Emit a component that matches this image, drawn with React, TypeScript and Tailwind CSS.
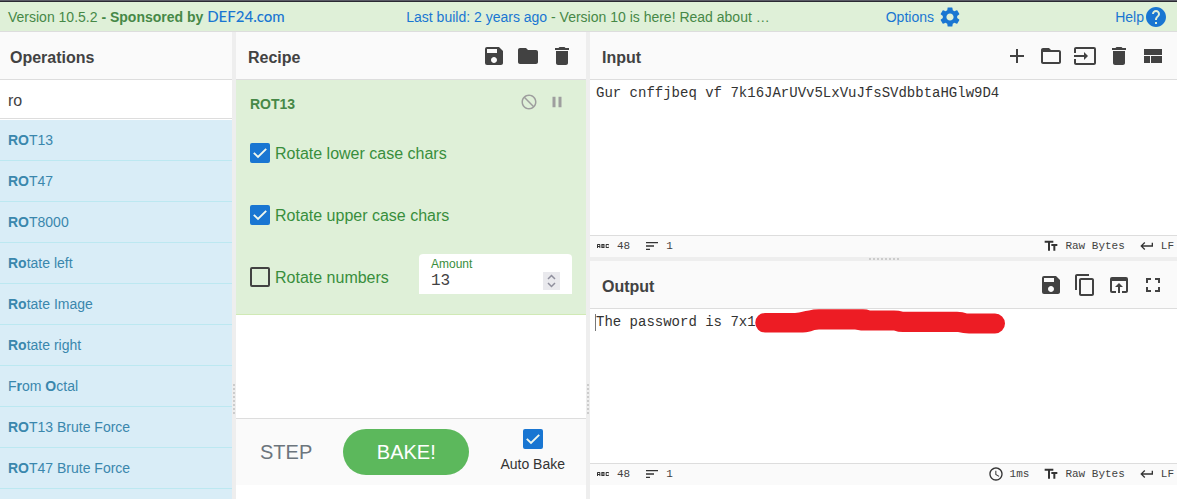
import React, { useState } from "react";
import type { IconType } from "react-icons";
import {
  MdAbc,
  MdAdd,
  MdContentCopy,
  MdDelete,
  MdFolder,
  MdFullscreen,
  MdHelp,
  MdInput,
  MdKeyboardReturn,
  MdNotInterested,
  MdOpenInBrowser,
  MdPause,
  MdSave,
  MdSchedule,
  MdSettings,
  MdSort,
  MdTextFields,
} from "react-icons/md";

type IconProps = { className?: string };

function FolderOutline({ className }: IconProps) {
  return (
    <svg viewBox="0 0 24 24" fill="currentColor" className={className}>
      <path d="M20 6h-8l-2-2H4c-1.100 0-1.990.9-1.990 2L2 18c0 1.100.9 2 2 2h16c1.100 0 2-.9 2-2V8c0-1.100-.9-2-2-2zm0 12H4V8h16v10z" />
    </svg>
  );
}

function LayoutIcon({ className }: IconProps) {
  return (
    <svg viewBox="0 0 24 24" fill="currentColor" className={className}>
      <path d="M3 19h6v-7H3v7zm7 0h11v-7H10v7zM3 5v6h18V5H3z" />
    </svg>
  );
}

type AnyIcon = IconType | React.FC<IconProps>;

function IconButton({ icon: Icon, label }: { icon: AnyIcon; label: string }) {
  return (
    <button type="button" aria-label={label} className="text-[#424242]">
      <Icon className="size-6" />
    </button>
  );
}

function TitleBar({ title, children }: { title: string; children?: React.ReactNode }) {
  return (
    <header className="flex h-12 shrink-0 items-center justify-between border-b border-[#ddd] bg-[#fafafa] px-3">
      <h2 className="pt-1 text-base font-bold text-[#424242]">{title}</h2>
      <div className="flex gap-2.5">{children}</div>
    </header>
  );
}

function CheckBox({ label, id, initial = false }: { label?: string; id: string; initial?: boolean }) {
  const [on, setOn] = useState(initial);
  return (
    <span className="relative size-5 shrink-0">
      <input
        id={id}
        type="checkbox"
        aria-label={label}
        checked={on}
        onChange={() => setOn(!on)}
        className="block size-5 appearance-none rounded-xs border-2 border-[#424242] checked:border-[#1976d2] checked:bg-[#1976d2]"
      />
      {on && (
        <svg viewBox="0 0 20 20" className="pointer-events-none absolute inset-0 size-5">
          <path d="M3.800 9.800L8 14L16.200 5.800" fill="none" stroke="#f1f8ee" strokeWidth="1.900" />
        </svg>
      )}
    </span>
  );
}

function CheckRow({ id, label, initial }: { id: string; label: string; initial?: boolean }) {
  return (
    <div className="flex items-center gap-[5px]">
      <CheckBox id={id} initial={initial} />
      <label htmlFor={id} className="pt-0.5 text-base leading-5 text-[#388e3c]">
        {label}
      </label>
    </div>
  );
}

function Status({ icon: Icon, children }: { icon: AnyIcon; children: React.ReactNode }) {
  return (
    <span className="flex items-center gap-1.5">
      <Icon className="size-4 text-[#333]" />
      <span>{children}</span>
    </span>
  );
}

function StatusBar({ time }: { time?: string }) {
  return (
    <footer className="flex h-[22px] shrink-0 items-center justify-between border-t border-[#ddd] bg-[#fafafa] pr-[3px] pb-px pl-[5px] font-['Liberation_Mono',monospace] text-[11px] text-[#424242]">
      <div className="flex gap-3.5">
        <Status icon={MdAbc}>48</Status>
        <Status icon={MdSort}>1</Status>
      </div>
      <div className="flex gap-3.5">
        {time && <Status icon={MdSchedule}>{time}</Status>}
        <Status icon={MdTextFields}>Raw Bytes</Status>
        <Status icon={MdKeyboardReturn}>LF</Status>
      </div>
    </footer>
  );
}

function VerticalGutter() {
  return (
    <div className="flex w-1 shrink-0 flex-col items-center bg-[#eee]">
      <div className="flex-[352]" />
      <div className="flex flex-col gap-0.5">
        {Array.from({ length: 8 }, (_, i) => (
          <i key={i} className="size-0.5 bg-[#ccc]" />
        ))}
      </div>
      <div className="flex-[85]" />
    </div>
  );
}

const operations: [string, boolean][][] = [
  [["RO", true], ["T13", false]],
  [["RO", true], ["T47", false]],
  [["RO", true], ["T8000", false]],
  [["Ro", true], ["tate left", false]],
  [["Ro", true], ["tate Image", false]],
  [["Ro", true], ["tate right", false]],
  [["F", false], ["r", true], ["om ", false], ["O", true], ["ctal", false]],
  [["RO", true], ["T13 Brute Force", false]],
  [["RO", true], ["T47 Brute Force", false]],
  [],
];

function Operations() {
  const [query, setQuery] = useState("ro");
  return (
    <section className="flex min-w-0 flex-[232] flex-col overflow-hidden">
      <header className="flex h-12 shrink-0 items-center border-b border-[#ddd] bg-[#fafafa] px-2.5">
        <h2 className="pt-1 text-base font-bold text-[#424242]">Operations</h2>
      </header>
      <input
        type="text"
        aria-label="Search operations"
        value={query}
        onChange={(e) => setQuery(e.target.value)}
        className="mb-px h-[39px] w-full shrink-0 border-b border-[#ddd] px-2 pt-1 text-base text-[#424242] outline-none"
      />
      <ul className="min-h-0 flex-1 overflow-hidden">
        {operations.map((parts, i) => (
          <li
            key={i}
            className="h-[41px] border-b border-[#bce8f1] bg-[#d9edf7] px-2 text-sm leading-10 whitespace-pre text-[#3a87ad]"
          >
            {parts.map(([text, bold], j) => (bold ? <b key={j}>{text}</b> : <span key={j}>{text}</span>))}
          </li>
        ))}
      </ul>
    </section>
  );
}

function Recipe() {
  const [amount, setAmount] = useState(13);
  return (
    <section className="flex min-w-0 flex-[350] flex-col pb-3.5">
      <TitleBar title="Recipe">
        <IconButton icon={MdSave} label="Save recipe" />
        <IconButton icon={MdFolder} label="Load recipe" />
        <IconButton icon={MdDelete} label="Clear recipe" />
      </TitleBar>
      <div className="border-b border-[#d0e9b5] bg-[#dff0d8] px-3.5 pt-3 pb-5">
        <div className="flex h-6 items-center justify-between">
          <h3 className="text-sm font-bold text-[#468847]">ROT13</h3>
          <div className="flex gap-2.5 pr-1.5 pb-1 text-[#9e9e9e]">
            <button type="button" aria-label="Disable operation">
              <MdNotInterested className="size-[18px]" />
            </button>
            <button type="button" aria-label="Set breakpoint">
              <MdPause className="size-[18px]" />
            </button>
          </div>
        </div>
        <div className="flex h-[62px] items-center pt-3">
          <CheckRow id="lower" label="Rotate lower case chars" initial />
        </div>
        <div className="flex h-[62px] items-center pt-3">
          <CheckRow id="upper" label="Rotate upper case chars" initial />
        </div>
        <div className="flex items-center justify-between pt-3.5">
          <div className="pt-1.5">
            <CheckRow id="numbers" label="Rotate numbers" />
          </div>
          <div className="flex h-10 w-[153px] items-end justify-between rounded-t bg-white px-3 pb-1">
            <div className="flex min-w-0 flex-col">
              <label htmlFor="amount" className="text-xs leading-3 text-[#388e3c]">
                Amount
              </label>
              <input
                id="amount"
                type="number"
                value={amount}
                onChange={(e) => setAmount(Number(e.target.value))}
                className="h-5 w-20 appearance-none pt-0.5 font-['Liberation_Mono',monospace] text-base leading-[18px] text-[#424242] outline-none [appearance:textfield]"
              />
            </div>
            <div className="flex h-[18px] w-[17px] flex-col items-center bg-[#e9e9ed] text-[#8f8f9d]">
              <button type="button" aria-label="Increase" onClick={() => setAmount(amount + 1)}>
                <svg viewBox="0 0 9 9" className="block size-[9px]" fill="none" stroke="currentColor" strokeWidth="1.500">
                  <path d="M1 7L4.500 3.500L8 7" />
                </svg>
              </button>
              <button type="button" aria-label="Decrease" onClick={() => setAmount(amount - 1)}>
                <svg viewBox="0 0 9 9" className="block size-[9px]" fill="none" stroke="currentColor" strokeWidth="1.500">
                  <path d="M1 2L4.500 5.500L8 2" />
                </svg>
              </button>
            </div>
          </div>
        </div>
      </div>
      <div className="flex-1 bg-white" />
      <div className="flex h-[67px] shrink-0 items-center justify-between border-t border-[#ddd] bg-[#fafafa] pr-[21px] pl-6">
        <button type="button" className="text-xl text-[#6c757d]">
          STEP
        </button>
        <button type="button" className="h-[46px] w-[126px] rounded-full bg-[#5cb85c] text-xl text-white">
          BAKE!
        </button>
        <div className="flex flex-col items-center gap-[5px] pb-0.5">
          <CheckBox id="auto-bake" initial />
          <label htmlFor="auto-bake" className="text-sm text-[#333]">
            Auto Bake
          </label>
        </div>
      </div>
    </section>
  );
}

function InputOutput() {
  return (
    <div className="flex min-w-0 flex-[587] flex-col pb-3.5">
      <section className="flex min-h-0 flex-[225] flex-col">
        <TitleBar title="Input">
          <IconButton icon={MdAdd} label="Add tab" />
          <IconButton icon={FolderOutline} label="Open folder" />
          <IconButton icon={MdInput} label="Open file" />
          <IconButton icon={MdDelete} label="Clear input" />
          <IconButton icon={LayoutIcon} label="Reset layout" />
        </TitleBar>
        <textarea
          aria-label="Input"
          defaultValue="Gur cnffjbeq vf 7k16JArUVv5LxVuJfsSVdbbtaHGlw9D4"
          className="block min-h-0 w-full flex-1 resize-none bg-white px-1.5 py-[3px] font-['Liberation_Mono',monospace] text-sm leading-5 text-[#333] outline-none"
        />
        <StatusBar />
      </section>
      <div className="flex h-1 shrink-0 items-center justify-center gap-0.5 bg-[#eee]">
        {Array.from({ length: 8 }, (_, i) => (
          <i key={i} className="size-0.5 bg-[#ccc]" />
        ))}
      </div>
      <section className="flex min-h-0 flex-[224] flex-col">
        <TitleBar title="Output">
          <IconButton icon={MdSave} label="Save output" />
          <IconButton icon={MdContentCopy} label="Copy output" />
          <IconButton icon={MdOpenInBrowser} label="Move output to input" />
          <IconButton icon={MdFullscreen} label="Maximise output" />
        </TitleBar>
        <div className="min-h-0 flex-1 bg-white px-[5px] py-[3px]">
          <div className="relative flex h-5 items-center">
            <span className="h-[17px] w-px bg-[#777]" />
            <output className="font-['Liberation_Mono',monospace] text-sm leading-5 text-[#333]">
              The password is 7x1
            </output>
            <svg viewBox="0 0 250 26" className="absolute -top-[3px] left-40 h-[26px] w-[250px]" fill="#ed1c24">
              <path d="M10 4H40C46 3.500 49 2.100 54 1.500Q58 .3 64 .3H108Q112 .3 115 1.500H139Q144 1.500 148 2.700H202Q208 3 212 4.500H240A9.700 9.700 0 0 1 240 24.500H214Q208 24.300 203 23H148Q143 23 139 21.500H106Q103 21.100 100 20.600H64Q59 21 56 22.200Q52 23.500 44 23.500H10A9.700 9.700 0 0 1 10 4Z" />
            </svg>
          </div>
        </div>
        <StatusBar time="1ms" />
      </section>
    </div>
  );
}

export default function App() {
  return (
    <div className="flex h-screen flex-col overflow-hidden bg-white font-['Liberation_Sans',Arial,sans-serif]">
      <div className="h-0.5 shrink-0 border-b border-[#2b2a33] bg-[#5b5b66]" />
      <nav className="grid h-[30px] shrink-0 grid-cols-[1fr_auto_1fr] items-center border-b border-[#ddd] bg-[#dff0d8] pr-[9px] pl-2 text-sm text-[#468847]">
        <div className="whitespace-nowrap">
          Version 10.5.2{" "}
          <b>
            - Sponsored by{" "}
            <a href="#sponsor" className="font-['Lato',sans-serif] text-[15px] font-medium text-[#1976d2]">
              DEF24.com
            </a>
          </b>
        </div>
        <div className="whitespace-nowrap">
          <a href="#changelog" className="text-[#1976d2]">
            Last build: 2 years ago
          </a>{" "}
          - Version 10 is here! Read about …
        </div>
        <div className="flex items-center justify-between pl-[116px] text-[#1976d2]">
          <button type="button" className="flex items-center gap-1">
            Options
            <MdSettings className="size-6" />
          </button>
          <button type="button" className="flex items-center">
            Help
            <MdHelp className="size-6" />
          </button>
        </div>
      </nav>
      <main className="flex min-h-0 flex-1">
        <Operations />
        <VerticalGutter />
        <Recipe />
        <VerticalGutter />
        <InputOutput />
      </main>
    </div>
  );
}
